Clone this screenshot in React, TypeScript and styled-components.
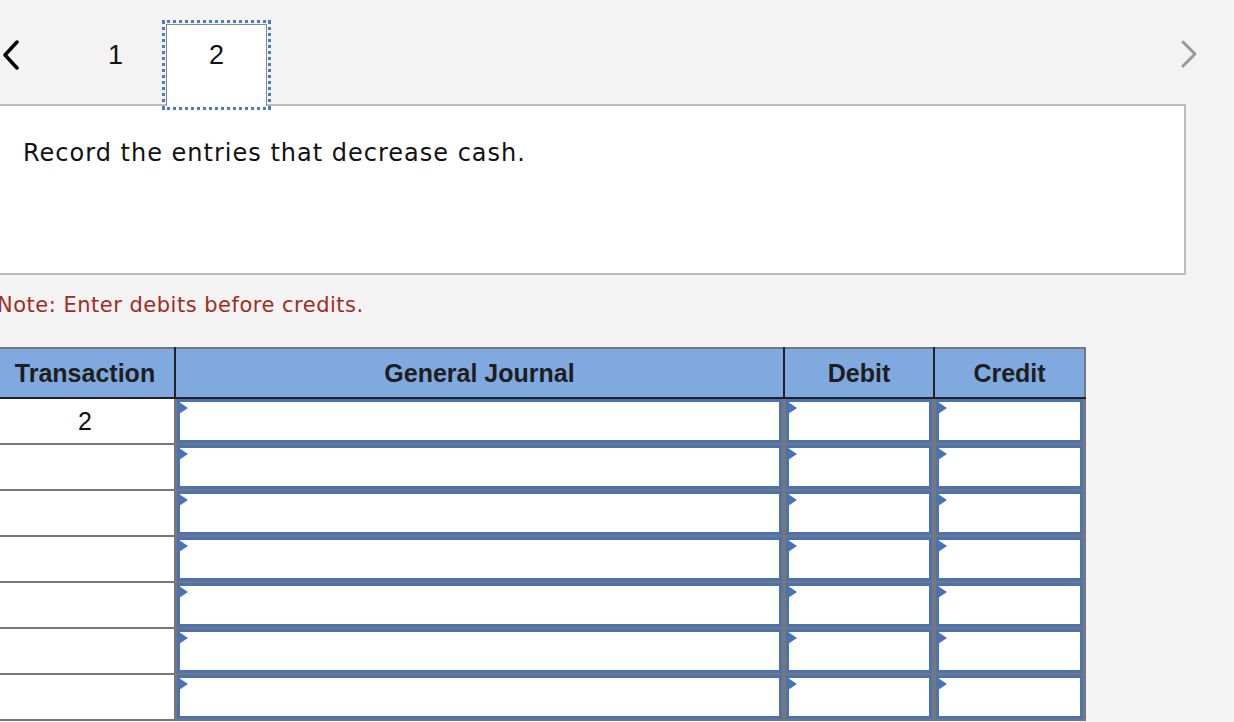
import React from "react";
import styled, { createGlobalStyle } from "styled-components";

const GlobalStyle = createGlobalStyle`
  html, body {
    margin: 0;
    padding: 0;
    background: #f3f3f3;
    overflow: hidden;
  }
`;

const Page = styled.div`
  width: 1240px;
  margin-left: -4px;
  font-family: "Liberation Sans", Arial, sans-serif;
  color: #111;
`;

const NavRow = styled.div`
  display: flex;
  align-items: flex-end;
  height: 104px;
  width: 1202px;
  position: relative;
  z-index: 2;
`;

const ChevronButton = styled.div<{ $side: "left" | "right" }>`
  display: flex;
  align-items: flex-start;
  justify-content: ${(p) => (p.$side === "left" ? "flex-start" : "flex-end")};
  align-self: stretch;
  width: ${(p) => (p.$side === "left" ? "69px" : "auto")};
  flex: ${(p) => (p.$side === "right" ? "1" : "none")};
  padding: 40px 0 0 ${(p) => (p.$side === "left" ? "6px" : "0")};
  box-sizing: border-box;
`;

const Tab = styled.div<{ $active?: boolean }>`
  width: 101px;
  height: 82px;
  margin-bottom: -2px;
  box-sizing: border-box;
  display: flex;
  justify-content: center;
  padding-top: 15px;
  font-size: 27px;
  line-height: 30px;
  background: ${(p) => (p.$active ? "#fff" : "transparent")};
  border: 1.5px solid ${(p) => (p.$active ? "#888" : "transparent")};
  border-bottom: none;
  outline: ${(p) => (p.$active ? "3px dotted #4a7bc6" : "none")};
  outline-offset: 1px;
`;

const Panel = styled.div`
  width: 1190px;
  height: 171px;
  box-sizing: border-box;
  background: #fff;
  border: 2px solid #bbb;
  padding: 33px 0 0 25px;
  font-family: "DejaVu Sans", Verdana, sans-serif;
  font-size: 24px;
  letter-spacing: 1px;
  color: #111;
`;

const Note = styled.p`
  margin: 0;
  padding: 18px 0 0 1px;
  height: 72px;
  box-sizing: border-box;
  font-family: "DejaVu Sans", Verdana, sans-serif;
  font-size: 21px;
  letter-spacing: 0.5px;
  color: #a32a22;
`;

const Table = styled.table`
  border-collapse: collapse;
  table-layout: fixed;
  width: 1082px;
`;

const HeadCell = styled.th<{ $w: number }>`
  width: ${(p) => p.$w}px;
  height: 48px;
  padding: 0;
  background: #80aadf;
  border-top: 2px solid #777;
  border-bottom: 2px solid #222;
  border-left: 2px solid #222;
  border-right: 2px solid #222;
  font-size: 25px;
  font-weight: bold;
  color: #1e1e1e;
  text-align: center;
  &:first-child {
    border-left: none;
  }
  &:last-child {
    border-right: 2px solid #777;
  }
`;

const TxCell = styled.td`
  height: 44px;
  padding: 0;
  background: #fff;
  border-bottom: 2px solid #777;
  border-right: 2px solid #777;
  font-size: 25px;
  text-align: center;
  vertical-align: middle;
`;

const EntryCell = styled.td`
  height: 44px;
  padding: 0;
  border: 2px solid #777;
  background: #777;
`;

const EntryBox = styled.div`
  position: relative;
  height: 44px;
  box-sizing: border-box;
  margin: 0 1px;
  background: #fff;
  border: 3px solid #4a73b6;
`;

const Marker = styled.span`
  position: absolute;
  left: -1px;
  top: 0;
  width: 0;
  height: 0;
  border-top: 6px solid transparent;
  border-bottom: 6px solid transparent;
  border-left: 9px solid #4a73b6;
`;

const Chevron = ({ dir, color }: { dir: "left" | "right"; color: string }) => (
  <svg width="18" height="30" viewBox="0 0 18 30">
    <path
      d={dir === "left" ? "M15 2 L3 15 L15 28" : "M3 2 L15 14 L3 26"}
      fill="none"
      stroke={color}
      strokeWidth={dir === "left" ? 3.5 : 3}
      strokeLinecap="round"
      strokeLinejoin="round"
    />
  </svg>
);

const rows = ["2", "", "", "", "", "", ""];

export default function App() {
  return (
    <Page>
      <GlobalStyle />
      <NavRow>
        <ChevronButton $side="left">
          <Chevron dir="left" color="#000" />
        </ChevronButton>
        <Tab>1</Tab>
        <Tab $active>2</Tab>
        <ChevronButton $side="right">
          <Chevron dir="right" color="#999" />
        </ChevronButton>
      </NavRow>
      <Panel>Record the entries that decrease cash.</Panel>
      <Note>Note: Enter debits before credits.</Note>
      <Table>
        <thead>
          <tr>
            <HeadCell $w={178}>Transaction</HeadCell>
            <HeadCell $w={607}>General Journal</HeadCell>
            <HeadCell $w={148}>Debit</HeadCell>
            <HeadCell $w={149}>Credit</HeadCell>
          </tr>
        </thead>
        <tbody>
          {rows.map((tx, i) => (
            <tr key={i}>
              <TxCell>{tx}</TxCell>
              {[0, 1, 2].map((c) => (
                <EntryCell key={c}>
                  <EntryBox>
                    <Marker />
                  </EntryBox>
                </EntryCell>
              ))}
            </tr>
          ))}
        </tbody>
      </Table>
    </Page>
  );
}
